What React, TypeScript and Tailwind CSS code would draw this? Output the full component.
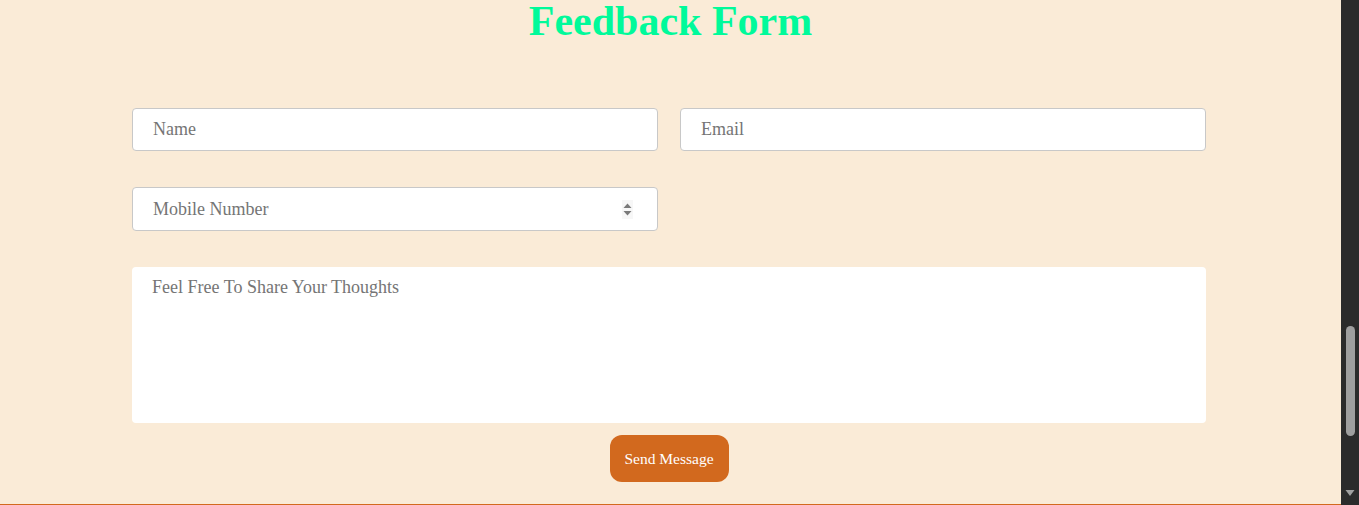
import React from 'react';

const serif = { fontFamily: '"Liberation Serif", "Times New Roman", serif' };

function Spinner() {
  return (
    <svg width="11" height="19" viewBox="0 0 11 19" className="shrink-0">
      <rect x="0" y="0" width="11" height="19" fill="#f7f7f7" />
      <path d="M5.5 3.5 L9.5 8 L1.5 8 Z" fill="#7a7a7a" />
      <path d="M5.5 15.5 L9.5 11 L1.5 11 Z" fill="#7a7a7a" />
    </svg>
  );
}

export default function App() {
  return (
    <div className="flex w-[1359px] h-[505px] overflow-hidden" style={serif}>
      <div className="flex-1 flex flex-col bg-[#faebd7] border-b border-[#d2691e]">
        <h1 className="text-center text-[42px] leading-[42px] font-bold text-[#00fa9a]">Feedback Form</h1>

        <form className="flex flex-col pl-[132px] pr-[135px] mt-[66px]" onSubmit={(e) => e.preventDefault()}>
          <div className="grid grid-cols-2 gap-[22px]">
            <input
              type="text"
              placeholder="Name"
              className="min-w-0 h-[43px] bg-white border border-[#c8c8c8] rounded-[4px] pl-[20px] text-[18px] placeholder:text-[#757575] outline-none"
            />
            <input
              type="email"
              placeholder="Email"
              className="min-w-0 h-[43px] bg-white border border-[#c8c8c8] rounded-[4px] pl-[20px] text-[18px] placeholder:text-[#757575] outline-none"
            />
          </div>

          <div className="grid grid-cols-2 gap-[22px] mt-[36px]">
            <div className="min-w-0 h-[44px] bg-white border border-[#c8c8c8] rounded-[4px] pl-[20px] pr-[24px] flex items-center">
              <input
                type="text"
                placeholder="Mobile Number"
                className="flex-1 min-w-0 text-[18px] placeholder:text-[#757575] outline-none bg-transparent"
              />
              <Spinner />
            </div>
            <div />
          </div>

          <textarea
            placeholder="Feel Free To Share Your Thoughts"
            className="mt-[36px] h-[156px] bg-white rounded-[4px] pl-[20px] pt-[7px] text-[18px] placeholder:text-[#757575] outline-none resize-none"
          />

          <div className="flex justify-center mt-[12px]">
            <button
              type="submit"
              className="w-[119px] h-[47px] bg-[#d2691e] text-white text-[15.5px] rounded-[12px]"
            >
              Send Message
            </button>
          </div>
        </form>
      </div>

      <div className="w-[18px] h-full bg-[#2b2b2b] flex flex-col items-center">
        <div className="h-[326px]" />
        <div className="w-[9px] h-[110px] rounded-full bg-[#9f9f9f]" />
        <div className="flex-1" />
        <svg width="10" height="8" viewBox="0 0 10 8" className="mb-[8px]">
          <path d="M0.5 1 L9.5 1 L5 7 Z" fill="#a0a0a0" />
        </svg>
      </div>
    </div>
  );
}
